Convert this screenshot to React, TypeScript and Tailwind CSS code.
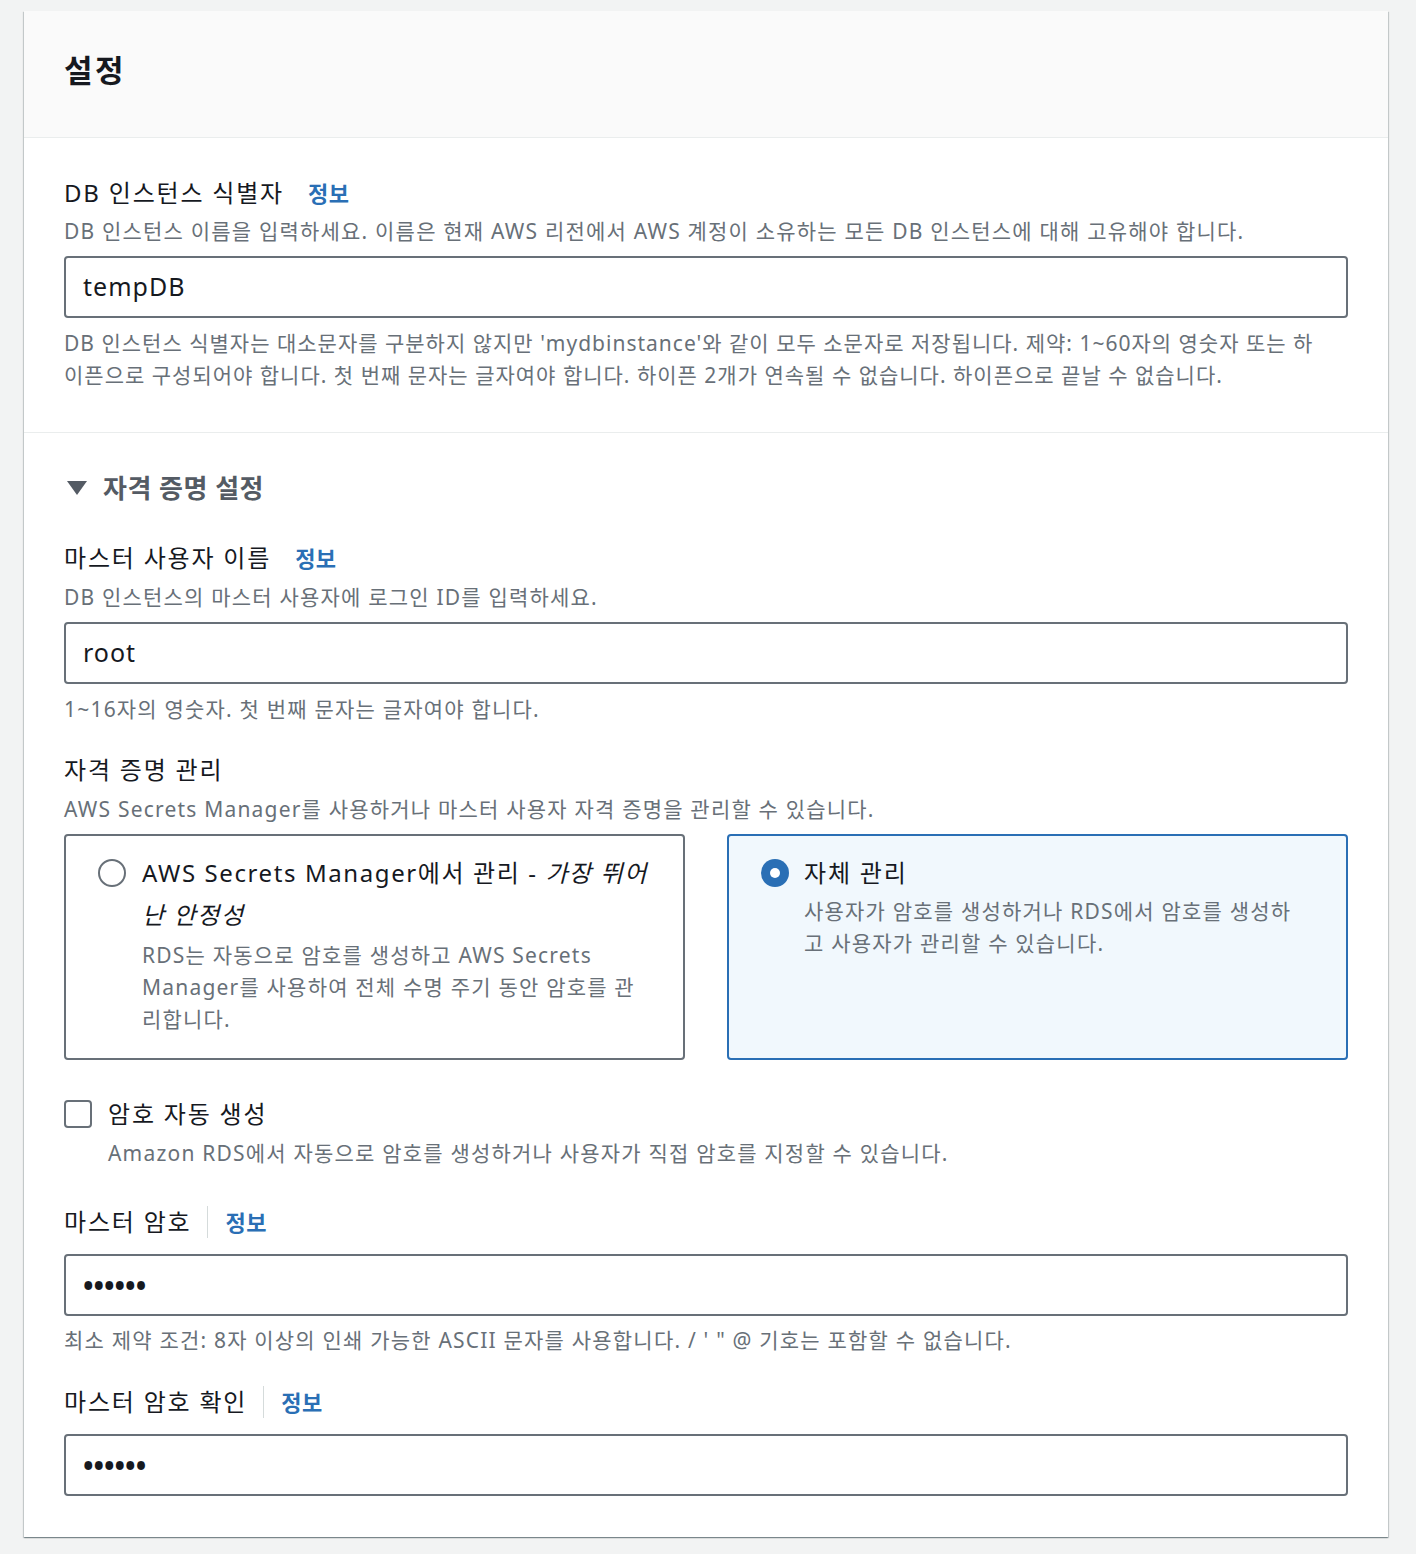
import React from 'react';

const font = { fontFamily: '"Noto Sans", "Noto Sans CJK KR", sans-serif' };

function InfoLink({ divider = false }: { divider?: boolean }) {
  return (
    <>
      {divider ? <span className="ml-[16px] mr-[17px] h-[32px] w-px bg-[#d5dbdb]" /> : <span className="w-[24px]" />}
      <span className="text-[22px] font-bold tracking-[0.5px] text-[#2a6fb5]">정보</span>
    </>
  );
}

function Label({ text, divider }: { text: string; divider?: boolean }) {
  return (
    <div className="flex h-[36px] items-center text-[24px] leading-[36px] tracking-[1.8px] text-[#16191f]">
      <span>{text}</span>
      <InfoLink divider={divider} />
    </div>
  );
}

function Desc({ children, className = '' }: { children: React.ReactNode; className?: string }) {
  return <div className={`text-[21px] leading-[32px] tracking-[1.2px] text-[#687078] ${className}`}>{children}</div>;
}

function Line({ children }: { children: React.ReactNode }) {
  return <span className="block whitespace-nowrap">{children}</span>;
}

function Input({ value, dots = false }: { value: string; dots?: boolean }) {
  return (
    <div className="flex h-[62px] items-center rounded-[4px] border-2 border-[#687078] bg-white px-[17px]">
      {dots ? (
        <span className="text-[28px] font-bold tracking-[0px] text-[#16191f]">{value}</span>
      ) : (
        <span className="text-[25px] tracking-[1px] text-[#16191f]">{value}</span>
      )}
    </div>
  );
}

function Radio({ checked }: { checked: boolean }) {
  return (
    <svg width="28" height="28" viewBox="0 0 28 28" className="mt-[7px] shrink-0">
      {checked ? (
        <>
          <circle cx="14" cy="14" r="14" fill="#2a6fb5" />
          <circle cx="14" cy="14" r="5" fill="#ffffff" />
        </>
      ) : (
        <circle cx="14" cy="14" r="13" fill="#ffffff" stroke="#687078" strokeWidth="2" />
      )}
    </svg>
  );
}

export default function App() {
  return (
    <div className="min-h-screen bg-[#f2f3f3] pb-[17px] pt-[11px]" style={font}>
      <div className="ml-[24px] w-[1364px] bg-white shadow-[0_1px_1px_0_rgba(0,28,36,0.3),1px_1px_1px_0_rgba(0,28,36,0.15),-1px_1px_1px_0_rgba(0,28,36,0.15)]">
        {/* header */}
        <div className="flex h-[127px] items-center border-b border-[#eaeded] bg-[#fafafa] px-[40px] pb-[8px]">
          <h2 className="text-[31px] font-bold tracking-[2.5px] text-[#16191f]">설정</h2>
        </div>

        {/* instance identifier */}
        <div className="border-b border-[#eaeded] px-[40px] pb-[41px] pt-[37px]">
          <Label text="DB 인스턴스 식별자" />
          <Desc className="mt-[4px]">
            DB 인스턴스 이름을 입력하세요. 이름은 현재 AWS 리전에서 AWS 계정이 소유하는 모든 DB 인스턴스에 대해 고유해야 합니다.
          </Desc>
          <div className="mt-[9px]">
            <Input value="tempDB" />
          </div>
          <Desc className="mt-[9px] tracking-[1px]">
            <Line>DB 인스턴스 식별자는 대소문자를 구분하지 않지만 'mydbinstance'와 같이 모두 소문자로 저장됩니다. 제약: 1~60자의 영숫자 또는 하</Line>
            <Line>이픈으로 구성되어야 합니다. 첫 번째 문자는 글자여야 합니다. 하이픈 2개가 연속될 수 없습니다. 하이픈으로 끝날 수 없습니다.</Line>
          </Desc>
        </div>

        {/* credentials */}
        <div className="px-[40px] pb-[41px] pt-[37px]">
          <div className="flex h-[36px] items-center gap-[15px] text-[26px] font-bold tracking-[0.5px] text-[#545b64]">
            <svg width="22" height="16" viewBox="0 0 22 16" className="ml-[2px]">
              <path d="M1 1 H21 L11 15 Z" fill="#545b64" />
            </svg>
            <span>자격 증명 설정</span>
          </div>

          <div className="mt-[34px]">
            <Label text="마스터 사용자 이름" />
          </div>
          <Desc className="mt-[5px]">DB 인스턴스의 마스터 사용자에 로그인 ID를 입력하세요.</Desc>
          <div className="mt-[9px]">
            <Input value="root" />
          </div>
          <Desc className="mt-[9px]">1~16자의 영숫자. 첫 번째 문자는 글자여야 합니다.</Desc>

          <div className="mt-[27px] text-[24px] leading-[36px] tracking-[1.8px] text-[#16191f]">자격 증명 관리</div>
          <Desc className="mt-[5px]">AWS Secrets Manager를 사용하거나 마스터 사용자 자격 증명을 관리할 수 있습니다.</Desc>

          <div className="mt-[9px] grid grid-cols-2 gap-[42px]">
            <div className="flex gap-[16px] rounded-[4px] border-2 border-[#687078] bg-white pb-[23px] pl-[32px] pr-[20px] pt-[16px]">
              <Radio checked={false} />
              <div>
                <div className="text-[24px] leading-[42px] tracking-[1.6px] text-[#16191f]">
                  <Line>
                    AWS Secrets Manager에서 관리 - <i>가장 뛰어</i>
                  </Line>
                  <Line>
                    <i>난 안정성</i>
                  </Line>
                </div>
                <Desc className="mt-[3px]">
                  <Line>RDS는 자동으로 암호를 생성하고 AWS Secrets</Line>
                  <Line>Manager를 사용하여 전체 수명 주기 동안 암호를 관</Line>
                  <Line>리합니다.</Line>
                </Desc>
              </div>
            </div>
            <div className="flex gap-[15px] rounded-[4px] border-2 border-[#2a6fb5] bg-[#f1f8fd] pb-[23px] pl-[32px] pr-[20px] pt-[16px]">
              <Radio checked />
              <div>
                <div className="text-[24px] leading-[42px] tracking-[1.8px] text-[#16191f]">자체 관리</div>
                <Desc className="mt-[1px]">
                  <Line>사용자가 암호를 생성하거나 RDS에서 암호를 생성하</Line>
                  <Line>고 사용자가 관리할 수 있습니다.</Line>
                </Desc>
              </div>
            </div>
          </div>

          <div className="mt-[36px] flex items-center gap-[16px]">
            <span className="h-[28px] w-[28px] rounded-[4px] border-2 border-[#687078] bg-white" />
            <span className="text-[24px] leading-[36px] tracking-[1.8px] text-[#16191f]">암호 자동 생성</span>
          </div>
          <Desc className="ml-[44px] mt-[5px]">Amazon RDS에서 자동으로 암호를 생성하거나 사용자가 직접 암호를 지정할 수 있습니다.</Desc>

          <div className="mt-[35px]">
            <Label text="마스터 암호" divider />
          </div>
          <div className="mt-[14px]">
            <Input value="••••••" dots />
          </div>
          <Desc className="mt-[8px]">최소 제약 조건: 8자 이상의 인쇄 가능한 ASCII 문자를 사용합니다. / ' " @ 기호는 포함할 수 없습니다.</Desc>

          <div className="mt-[28px]">
            <Label text="마스터 암호 확인" divider />
          </div>
          <div className="mt-[14px]">
            <Input value="••••••" dots />
          </div>
        </div>
      </div>
    </div>
  );
}
